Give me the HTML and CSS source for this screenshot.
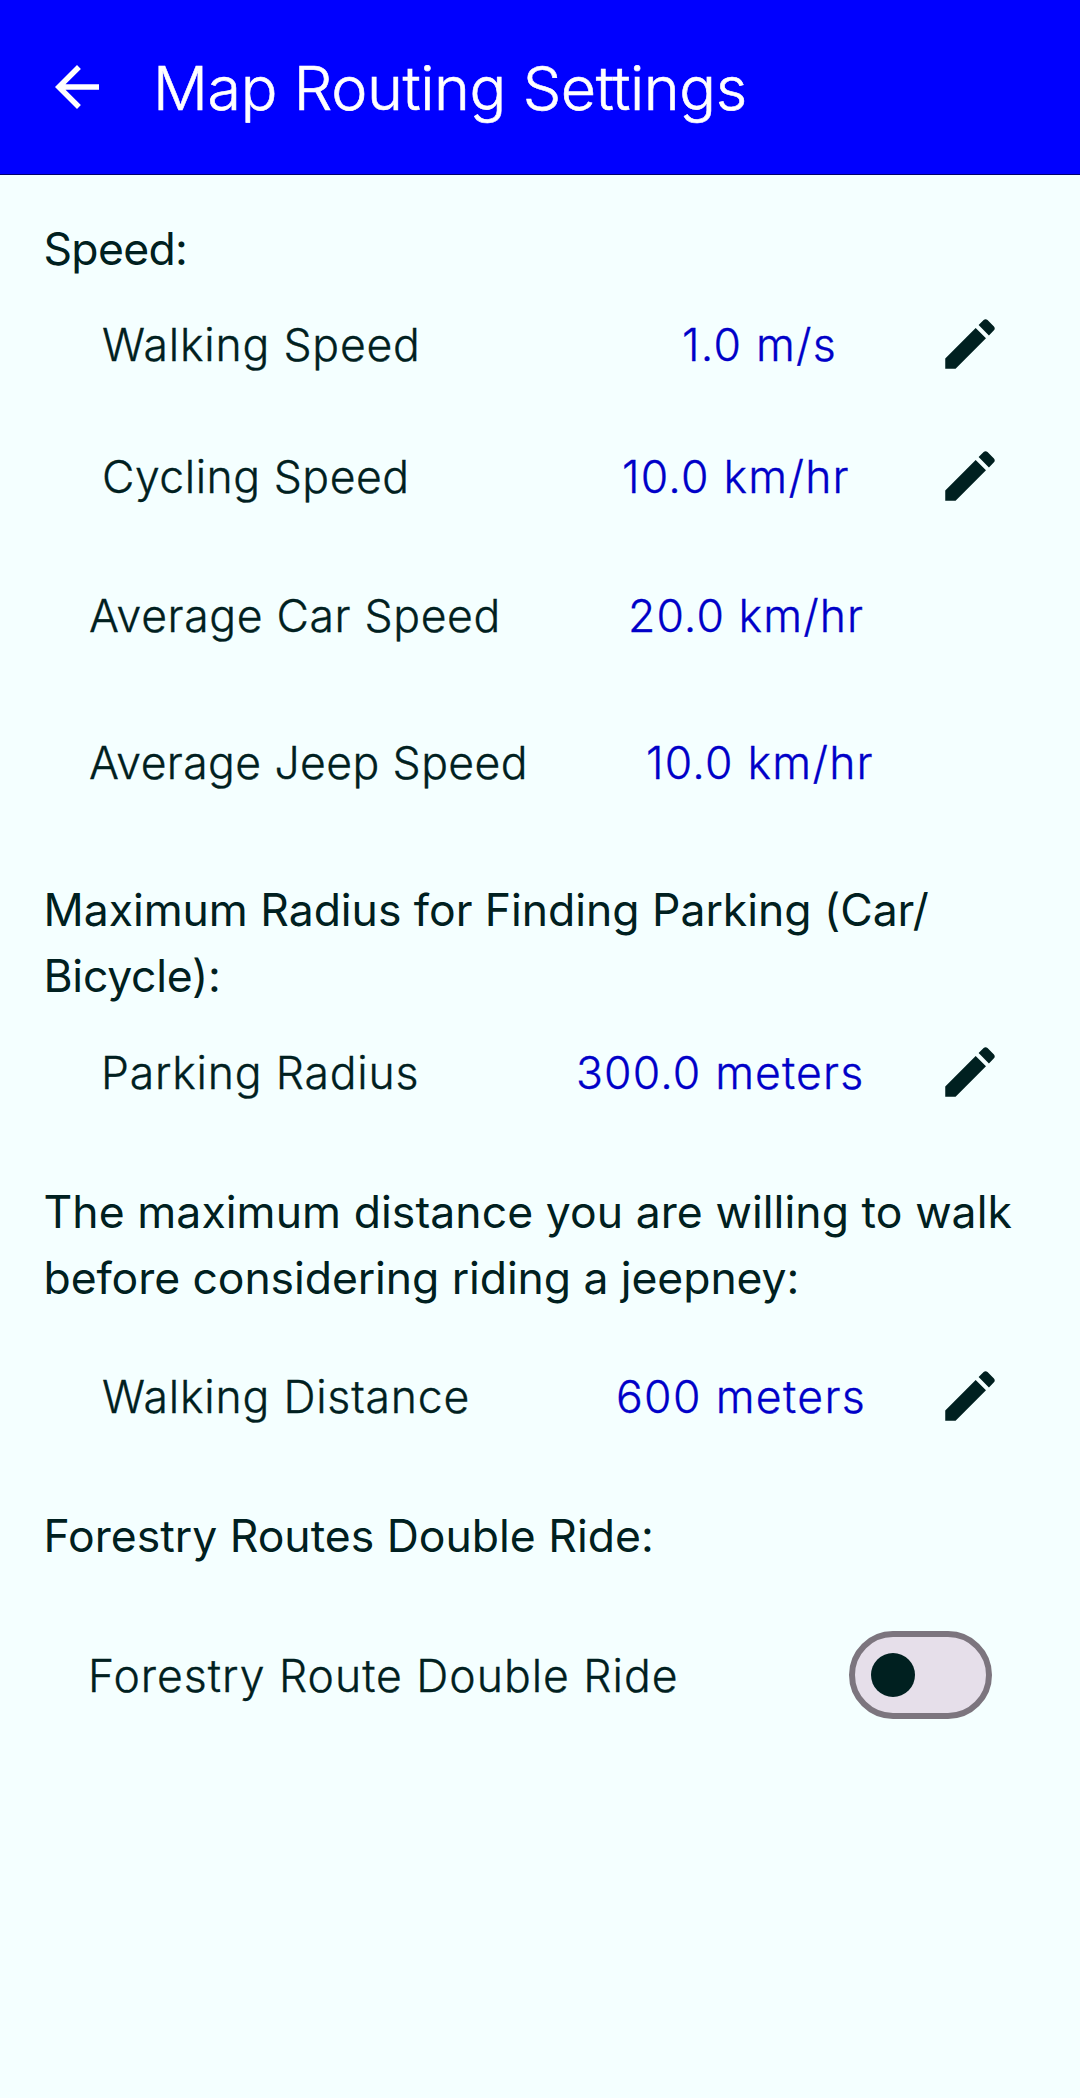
FILE: index.html
```html
<!DOCTYPE html>
<html lang="en">
<head>
<meta charset="utf-8">
<title>Map Routing Settings</title>
<link rel="stylesheet" href="styles.css">
</head>
<body>
<svg class="defs" aria-hidden="true">
  <symbol id="edit" viewBox="0 0 24 24"><path d="M3 17.25V21h3.75L17.81 9.94l-3.75-3.75L3 17.25zM20.71 7.04c.39-.39.39-1.02 0-1.41l-2.34-2.34c-.39-.39-1.02-.39-1.41 0l-1.83 1.83 3.75 3.75 1.83-1.83z"/></symbol>
</svg>
<header class="app-bar">
  <svg class="icon back" viewBox="0 0 24 24"><path d="M20 11H7.83l5.59-5.59L12 4l-8 8 8 8 1.41-1.41L7.83 13H20v-2z"/></svg>
  <h1 class="title">Map Routing Settings</h1>
</header>
<main class="settings">
  <h2 class="heading heading-speed">Speed:</h2>
  <div class="row row-walking">
    <span class="label">Walking Speed</span><span class="value">1.0 m/s</span>
    <svg class="icon edit"><use href="#edit"/></svg>
  </div>
  <div class="row row-cycling">
    <span class="label">Cycling Speed</span><span class="value">10.0 km/hr</span>
    <svg class="icon edit"><use href="#edit"/></svg>
  </div>
  <div class="row row-car">
    <span class="label">Average Car Speed</span><span class="value">20.0 km/hr</span>
  </div>
  <div class="row row-jeep">
    <span class="label">Average Jeep Speed</span><span class="value">10.0 km/hr</span>
  </div>
  <h2 class="heading heading-parking">Maximum Radius for Finding Parking (Car/<br><span class="bicycle">Bicycle):</span></h2>
  <div class="row row-parking">
    <span class="label">Parking Radius</span><span class="value">300.0 meters</span>
    <svg class="icon edit"><use href="#edit"/></svg>
  </div>
  <h2 class="heading heading-distance">The maximum distance you are willing to walk<br><span class="before">before considering riding a jeepney:</span></h2>
  <div class="row row-distance">
    <span class="label">Walking Distance</span><span class="value">600 meters</span>
    <svg class="icon edit"><use href="#edit"/></svg>
  </div>
  <h2 class="heading heading-forestry">Forestry Routes Double Ride:</h2>
  <div class="row row-forestry">
    <span class="label">Forestry Route Double Ride</span>
    <span class="switch" role="switch" aria-checked="false"><span class="thumb"></span></span>
  </div>
</main>
</body>
</html>
```
FILE: styles.css
```css
* { box-sizing: border-box; }
body {
  margin: 0;
  min-height: 2098px;
  background: #f4ffff;
  color: #002020;
  font: 300 44.5px/66px Inter, sans-serif;
}
.defs { display: none; }
.icon { flex: none; width: 66px; height: 66px; fill: currentColor; }

.app-bar {
  display: flex;
  height: 175px;
  padding: 0 44px;
  gap: 43px;
  background: #0000ff;
  border-bottom: 1px solid #00006e;
  color: #fff;
}
.back { margin-top: 54px; }
.title {
  margin: 55px 0 0;
  font-size: 61px;
  font-weight: 300;
  line-height: 66px;
  letter-spacing: -0.4px;
  -webkit-text-stroke: 0.6px currentColor;
}

.heading {
  margin: 0;
  padding: 0 0 0 43.5px;
  font-size: 44.5px;
  font-weight: 400;
  white-space: nowrap;
}
.heading-speed { padding-top: 41px; letter-spacing: -0.7px; }
.heading-parking { padding-top: 37px; letter-spacing: -0.03px; }
.bicycle { letter-spacing: -0.25px; }
.heading-distance { padding-top: 44px; letter-spacing: 0.07px; }
.before { letter-spacing: -0.08px; }
.heading-forestry { padding-top: 22px; }

.row {
  display: flex;
  align-items: center;
  padding: 0 77px 0 102px;
  white-space: nowrap;
}
/* Text sits one pixel below the centre line of the icons. */
.label, .value { padding-top: 2px; -webkit-text-stroke: 0.35px currentColor; }
.label { flex: none; letter-spacing: 0.8px; }
.value { color: #0000c8; letter-spacing: 1.25px; }
.edit { margin-left: auto; }

.row-walking { height: 124px; }
.row-walking .label { width: 580px; }
.row-cycling { height: 140px; }
.row-cycling .label { width: 520px; letter-spacing: 0.53px; }
.row-car { height: 140px; padding-left: 89px; }
.row-car .label { width: 539px; letter-spacing: 0.66px; }
.row-car .value { letter-spacing: 1.1px; }
.row-jeep { height: 154px; padding-left: 89px; }
.row-jeep .label { width: 557px; letter-spacing: 0.41px; }
.row-car .label, .row-car .value, .row-jeep .label, .row-jeep .value { padding-top: 0; }
.row-parking { height: 126px; padding-left: 101px; }
.row-parking .label { width: 475px; }
.row-parking .value { letter-spacing: 1.15px; }
.row-distance { height: 170px; }
.row-distance .label { width: 514px; }
.row-distance .value { letter-spacing: 1.35px; }
.row-forestry { height: 212px; padding-left: 88px; padding-right: 88px; }
.row-forestry .label { letter-spacing: 0.99px; }

.switch {
  display: flex;
  align-items: center;
  width: 143px;
  height: 88px;
  margin-left: auto;
  padding-left: 16px;
  border: 6px solid #7c757e;
  border-radius: 44px;
  background: #e6dfea;
}
.thumb { width: 44px; height: 44px; border-radius: 50%; background: #002020; }
```
